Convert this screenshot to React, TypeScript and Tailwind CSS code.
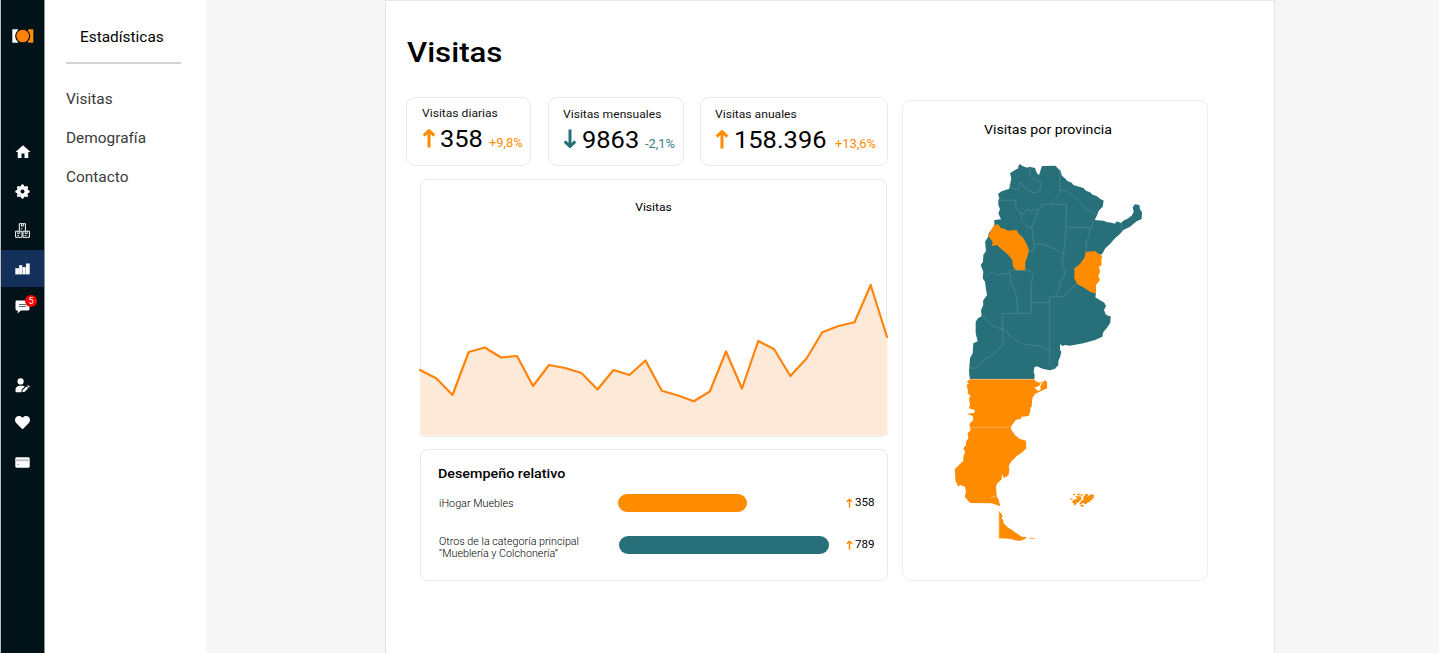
import React from "react";
import { FaHeart } from "react-icons/fa";
import { MdHome } from "react-icons/md";

const TEAL = "#27707a";
const ORANGE = "#ff8c00";

function Logo() {
  return (
    <svg width="22" height="14" viewBox="0 0 22 14">
      <path d="M0.3 0.3H6V13.7H0.3Z" fill="#fff" />
      <path d="M16 0.3H21.3V13.7H16Z" fill={ORANGE} />
      <circle cx="10.7" cy="7" r="7.6" fill="#011219" />
      <circle cx="10.7" cy="7" r="6.3" fill="#ff8205" />
    </svg>
  );
}

const lobes = [
  [7.5, 1.9], [11.5, 3.5], [13.1, 7.5], [11.5, 11.5], [7.5, 13.1], [3.5, 11.5], [1.9, 7.5], [3.5, 3.5],
];

function Gear() {
  return (
    <svg width="15" height="15" viewBox="0 0 15 15" fill="#fff">
      <circle cx="7.5" cy="7.5" r="5.7" />
      {lobes.map(([x, y]) => (
        <circle key={`${x}-${y}`} cx={x} cy={y} r="1.6" />
      ))}
      <circle cx="7.5" cy="7.5" r="2" fill="#011219" />
    </svg>
  );
}

function Boxes() {
  return (
    <svg width="15" height="15" viewBox="0 0 15 15" fill="none" stroke="#fff" strokeWidth="1">
      <path d="M4.3 0.7H10.4V7.8M4.3 0.7V7.8M0.6 8.2H7V14.3H0.6ZM8 8.2H14.4V14.3H8Z" />
      <path d="M6.5 1V3.2H8.3V1M2.8 8.5V10.6H4.8V8.5M10.2 8.5V10.6H12.2V8.5M2.3 12.5H4M9.7 12.5H11.4M5.8 5.8H7.4" strokeWidth="0.9" />
    </svg>
  );
}

function Bars() {
  return (
    <svg width="15" height="12" viewBox="0 0 15 12" fill="#fff">
      <rect x="0.3" y="5.2" width="3.6" height="6.2" />
      <rect x="4.1" y="2.2" width="3.2" height="9.2" />
      <rect x="7.5" y="4" width="3.2" height="7.4" />
      <rect x="11" y="0.5" width="3.7" height="10.9" />
    </svg>
  );
}

function Chat() {
  return (
    <svg width="15" height="14" viewBox="0 0 15 14">
      <path d="M1.8 0.6H13.2Q14.5 0.6 14.5 2V9Q14.5 10.4 13.2 10.4H5.8L2.7 13.4V10.4H1.8Q0.5 10.4 0.5 9V2Q0.5 0.6 1.8 0.6Z" fill="#fff" />
      <path d="M4 4.5H11M4 6.5H11" stroke="#4b5a60" strokeWidth="0.9" />
    </svg>
  );
}

function UserPen() {
  return (
    <svg width="15" height="15" viewBox="0 0 15 15" fill="#fff">
      <circle cx="5.6" cy="3.4" r="3.1" />
      <path d="M4.5 7.8H7.5Q9 7.8 9.7 8.6L6.5 11.8V14.2H1.5Q0.5 14.2 0.5 13V11.6Q0.7 8.2 4.5 7.8Z" />
      <path d="M7.5 12.2L11.5 8.5L13.2 10.3L9.4 14H7.5Z" />
      <path d="M12.1 7.9L13 7.3Q14.8 7.8 14.6 9L13.9 9.7Z" />
    </svg>
  );
}

function Card() {
  return (
    <svg width="15" height="11" viewBox="0 0 15 11">
      <rect x="0.3" y="0.3" width="14.4" height="10.4" rx="1.4" fill="#fff" />
      <rect x="0.3" y="2.3" width="14.4" height="2" fill="#c0c4c6" />
      <rect x="2.6" y="6.8" width="1.2" height="1" fill="#5b686d" />
    </svg>
  );
}

type ArrowProps = { color: string; className: string; down?: boolean };

function Arrow({ color, className, down }: ArrowProps) {
  return (
    <svg viewBox="0 0 14 20" className={className} fill="none" stroke={color} strokeWidth="3">
      <path d={down ? "M7 0.5V17.5M1.7 12.4L7 17.5L12.3 12.4" : "M7 19.5V2.5M1.7 7.6L7 2.5L12.3 7.6"} strokeLinejoin="round" strokeLinecap="butt" />
    </svg>
  );
}

const visits = [
  [420, 370], [436.5, 378.5], [452.5, 395], [468.7, 352], [484.8, 347.5], [501, 357.5], [517, 356],
  [533, 386], [549, 365], [565, 368], [581.5, 373], [597.5, 389.5], [613.5, 370], [629.5, 375],
  [645.5, 360.5], [661.8, 390.7], [678, 395.5], [693.8, 401.3], [709.8, 391.5], [726, 351.5], [742, 388.5],
  [758.2, 341], [774, 349], [790.3, 376], [806.5, 358.5], [822.3, 332.3], [838.5, 326], [854.5, 322.3],
  [870.7, 285], [887, 337],
];

function VisitsChart() {
  const line = visits.map(([x, y]) => `${x - 419},${y - 279}`).join(" ");
  return (
    <svg width="470" height="157" viewBox="0 0 470 157" className="-ml-0.5 shrink-0">
      <path d={`M1 91L${line.split(" ").join("L")}L468.5 58V155Q468.5 156.5 467 156.5H3Q1 156.5 1 155Z`} fill="#fde9d8" />
      <polyline points={line} fill="none" stroke="#ff840b" strokeWidth="2.2" strokeLinejoin="round" strokeLinecap="round" />
    </svg>
  );
}

function ArgentinaMap() {
  return (
    <svg width="204" height="400" viewBox="0 0 612 1200">
      <path fill={TEAL} d="M240 42L247 48L262 53L268 50L285 54L290 68L297 76L301 62L306 48L346 47L361 62L366 77L377 87L382 93L395 98L400 105L410 108L430 114L438 122L450 127L458 134L470 138L480 146L491 152L488 170L476 182L472 194L464 210L490 212L503 217L515 218L525 221L530 214L543 219L550 212L565 205L576 196L581 185L578 172L585 163L598 165L600 178L606 187L605 207L590 214L570 230L550 240L540 252L525 265L510 282L496 295L486 313L440 320L410 400L468 430L466 442L478 449L493 458L498 468L492 480L497 493L504 497L512 499L511 518L500 535L490 546L487 560L465 570L430 580L390 587L375 585L368 588L360 583L360 600L364 606L360 622L355 632L355 645L345 656L330 661L310 657L290 649L283 652L281 665L284 675L283 688H90L87 665L90 625L98 610L100 580L113 574L107 550L107 515L114 505L125 498L123 480L130 465L129 452L141 435L138 418L135 395L128 385L130 365L122 345L129 335L130 315L138 303L135 275L144 262L146 250L158 235L163 225L163 210L183 208L175 190L180 178L175 165V151L178 145L174 132L185 124L208 116L211 100L214 85L210 70L225 60L235 55V48Z" />
      <g fill="none" stroke="#4f8890" strokeWidth="2.2" strokeLinejoin="round">
        <path d="M208 104L222 117L232 119L238 112L238 98L245 98L250 110L264 121L280 128L293 127L301 119V95L286 92L278 85L270 72L269 55" />
        <path d="M360 60V128L350 142L333 163M360 118L376 123L400 136L420 155L436 176L455 184L471 194M380 232H456L460 210M306 163H380L378 240L371 310" />
        <path d="M175 151H227L227 172L240 188L251 192L260 178L273 182L279 177L295 181L306 163M240 188L245 200L244 210L255 222L263 234L274 231L285 205L295 181M274 231L280 250L277 266L283 282V302L266 305" />
        <path d="M283 284L298 282L318 285L335 293L348 296L360 308L371 310L366 340L374 365L372 380L360 400L360 413L347 438M450 233L446 260L439 275V306M543 219L546 245" />
        <path d="M133 387L146 373L158 363L164 372L176 376L185 371H208L211 361M211 370L213 400L225 423L231 450L233 489M219 361L270 362L279 375L274 405V490M408 403L395 415L371 440H329V642L343 652M347 438L344 440" />
        <path d="M274 458H329M274 490H184L188 497V570L193 580L177 595L155 618L137 625L126 638L111 648L102 656L90 652M129 497L142 515L158 527L179 536L190 539M188 535L202 544L207 559L228 571L248 582L275 586L300 588L329 602" />
      </g>
      <path fill={ORANGE} d="M158 232L163 225L175 223L182 234L193 236L204 242L230 240L235 250L250 265L260 282L267 300L262 320L256 335V360L228 361L219 350L217 330L205 315L185 298L170 285L156 288L158 275L144 258Z" />
      <path fill={ORANGE} d="M437 306L465 303L475 311L487 318L484 330L485 345L477 350L480 365L475 378L480 390L473 398L468 405V431L450 425L430 412L412 403L403 385V355L420 342L434 322Z" />
      <path fill={ORANGE} d="M90 688H283L286 693L298 698L310 695L315 690L321 697V715L302 724L285 732L277 745L275 770L270 774L272 780L266 798L245 800L242 807L228 809L220 820L214 827L213 838L225 855L238 866L258 872L259 895L245 908L230 918L212 937L206 950L208 957L206 975L192 984L186 972L185 988L172 1000L168 1010L169 1025L170 1037L176 1050L181 1069L155 1060L90 1059L75 1042V1036L78 1025L75 1010L60 1005L55 1010L50 998L47 995L44 958L60 942L70 932V922L75 905L70 895L78 885L78 875L85 865L83 850L92 840L88 825L90 820L100 810L98 798L80 791L103 789L105 780L86 775L90 765L87 745L92 738L83 730L84 724L80 705L87 700L80 696Z" />
      <path fill="#fff" d="M283 713L298 707L302 700L308 698L301 709L302 720L293 722Z" />
      <path d="M92 688H283M91 832H213" fill="none" stroke="#ffb966" strokeWidth="2" />
      <path d="M153 1042L166 1040L171 1045" fill="none" stroke="#ffd6a0" strokeWidth="2" />
      <path fill={ORANGE} d="M178 1085L185 1092L188 1100L183 1104L189 1109L191 1120L203 1132L220 1143L245 1160L259 1161L256 1167L240 1172L225 1171L210 1166L178 1165ZM268 1163L284 1164L283 1166H270Z" />
      <path d="M177.500 1083V1165" stroke={ORANGE} strokeWidth="2" />
      <path fill={ORANGE} d="M399 1031l7 1-2 4-5-1zM410 1033l9-2 3 4-10 1zM423 1032l6 2-3 4-5-3zM406 1039l8-1 3 4-7 2zM418 1038l7 2-3 5 4 2-7 5-6 7-5-2 2 5-6 3-3-6-6-1 6-4 5 1 3-6 6-4zM393 1045l5 1-2 4-4-2zM388 1048l3-1 1 3zM436 1033l6-2 3 4-4 5 6-2 2-5 6 2 2-3 3 3-3 4 6 1-2 5-5-1 2 5-6 2-3 5-6 1-5 6-7-2 2-5-6 3-5 5-4-2 5-8 6-4 2-6-3-2 5-3zM421 1065l7-1 4 2-3 5-6-2zM397 1056l4 1-2 2zM400 1062l5 2-1 4zM455 1032l8 3-2 4-5-2zM398 1051l9-3 8-5 4 2-8 10-6 4-7-1zM428 1058l8-9 6-9 9-1 8 5-8 8-8 4-7 6z" />
    </svg>
  );
}

type StatProps = {
  label: string;
  value: string;
  change: string;
  down?: boolean;
  className: string;
  valueClass: string;
};

function Stat({ label, value, change, down, className, valueClass }: StatProps) {
  return (
    <section className={`flex h-[69px] flex-col rounded-[9px] border border-[#e9e9e9] ${className}`}>
      <h2 className="origin-left scale-x-[1.1] text-[11px] leading-[14px] whitespace-nowrap text-[#111]">{label}</h2>
      <div className="mt-[5px] flex h-[24px] items-center whitespace-nowrap">
        <Arrow color={down ? TEAL : ORANGE} down={down} className="h-[20px] w-[14px] shrink-0" />
        <span className={`mt-[2px] origin-left scale-x-[1.06] text-[24px] leading-[24px] text-black ${valueClass}`}>{value}</span>
        <span className={`mt-[10px] origin-left scale-x-[1.07] text-[12px] leading-[14px] ${down ? "text-[#3a7c85]" : "text-[#ff8c00]"}`}>{change}</span>
      </div>
    </section>
  );
}

export default function App() {
  return (
    <div className="flex h-[653px] w-[1439px] overflow-hidden bg-[#f6f6f6] font-['Roboto',sans-serif] text-black">
      <nav className="flex w-[45px] shrink-0 flex-col items-center border-x border-l-[#b8bec1] border-r-[#8d9498] bg-[#011219] text-white">
        <div className="mt-[29px] flex h-[14px] items-center"><Logo /></div>
        <div className="mt-[90px] flex h-[38px] items-center"><MdHome size={18} /></div>
        <div className="flex h-[40px] items-center"><Gear /></div>
        <div className="flex h-[38px] items-center"><Boxes /></div>
        <div className="mt-px flex h-[37px] w-full items-center justify-center bg-[#12305a]"><Bars /></div>
        <div className="relative flex h-[40px] items-center">
          <Chat />
          <span className="absolute top-[8px] left-[10px] flex h-[12px] w-[12px] items-center justify-center rounded-full bg-[#fa0000] text-[9px] leading-none">5</span>
        </div>
        <div className="mt-[38px] flex h-[40px] items-center"><UserPen /></div>
        <div className="flex h-[35px] items-center"><FaHeart size={15} /></div>
        <div className="flex h-[45px] items-center"><Card /></div>
      </nav>

      <aside className="flex w-[161px] shrink-0 flex-col bg-white pl-[21px] text-[14px] leading-[18px]">
        <h2 className="mt-[28px] origin-left translate-x-[14px] scale-x-[1.1]">Estadísticas</h2>
        <div className="mt-[16px] h-[1.5px] w-[115px] bg-[#d4d4d4]" />
        <ul className="mt-[26px] flex origin-left scale-x-[1.1] flex-col gap-[21px] text-[#3a3a3a]">
          <li>Visitas</li>
          <li>Demografía</li>
          <li>Contacto</li>
        </ul>
      </aside>

      <main className="ml-[179px] flex h-[670px] w-[890px] shrink-0 flex-col border border-[#e5e5e5] bg-white pl-5">
        <h1 className="mt-[36px] w-[200px] origin-left translate-x-px scale-x-[1.115] text-[28px] leading-[32px] font-medium">Visitas</h1>
        <div className="mt-[28px] flex">
          <div className="flex w-[482px] shrink-0 flex-col">
            <div className="flex">
              <Stat label="Visitas diarias" value="358" change="+9,8%" className="w-[125px] pt-[9px] pl-[15px]" valueClass="ml-[4px] w-[49px]" />
              <Stat label="Visitas mensuales" value="9863" change="-2,1%" down className="ml-[17px] w-[136px] pt-[10px] pl-[14px]" valueClass="ml-[5px] w-[63px]" />
              <Stat label="Visitas anuales" value="158.396" change="+13,6%" className="ml-4 w-[188px] pt-[10px] pl-[14px]" valueClass="ml-[5px] w-[101px]" />
            </div>
            <section className="mt-[13px] ml-[14px] flex h-[258px] w-[467px] flex-col rounded-[7px] border border-[#e9e9e9]">
              <h2 className="mt-[21px] mb-[64px] scale-x-[1.1] text-center text-[11px] leading-[14px]">Visitas</h2>
              <VisitsChart />
            </section>
            <section className="mt-3 ml-[14px] flex h-[132px] w-[468px] flex-col rounded-[8px] border border-[#e9e9e9] pr-3 pl-[17px]">
              <h2 className="mt-[16px] w-[200px] origin-left scale-x-[1.1] text-[13px] leading-[16px] font-medium">Desempeño relativo</h2>
              <div className="mt-[12px] flex h-[18px] items-center pl-px">
                <span className="mt-px mr-[3px] w-[176px] origin-left scale-x-[1.08] text-[10px] font-light">iHogar Muebles</span>
                <div className="h-[18px] w-[129px] rounded-full bg-[#ff8c00]" />
                <Arrow color={ORANGE} className="ml-auto h-[10px] w-[7px]" />
                <span className="mt-px ml-[2px] w-[20px] origin-left scale-x-[1.06] text-[11px]">358</span>
              </div>
              <div className="mt-[23px] flex h-[19px] items-center pl-px">
                <span className="mt-[6px] mr-[5px] w-[175px] origin-left scale-x-[1.075] text-[10px] leading-[12px] font-light">Otros de la categoría principal<br />“Mueblería y Colchonería”</span>
                <div className="h-[18px] w-[210px] rounded-full bg-[#27707a]" />
                <Arrow color={ORANGE} className="ml-auto h-[10px] w-[7px]" />
                <span className="mt-px ml-[2px] w-[20px] origin-left scale-x-[1.06] text-[11px]">789</span>
              </div>
            </section>
          </div>
          <section className="mt-[3px] ml-[14px] flex h-[481px] w-[306px] flex-col rounded-[9px] border border-[#ededed] pl-[36.500px]">
            <h2 className="mt-[21px] -ml-[36.500px] w-[290px] scale-x-[1.09] text-center text-[13px] leading-[16px]">Visitas por provincia</h2>
            <div className="mt-[12px]"><ArgentinaMap /></div>
          </section>
        </div>
      </main>
    </div>
  );
}
